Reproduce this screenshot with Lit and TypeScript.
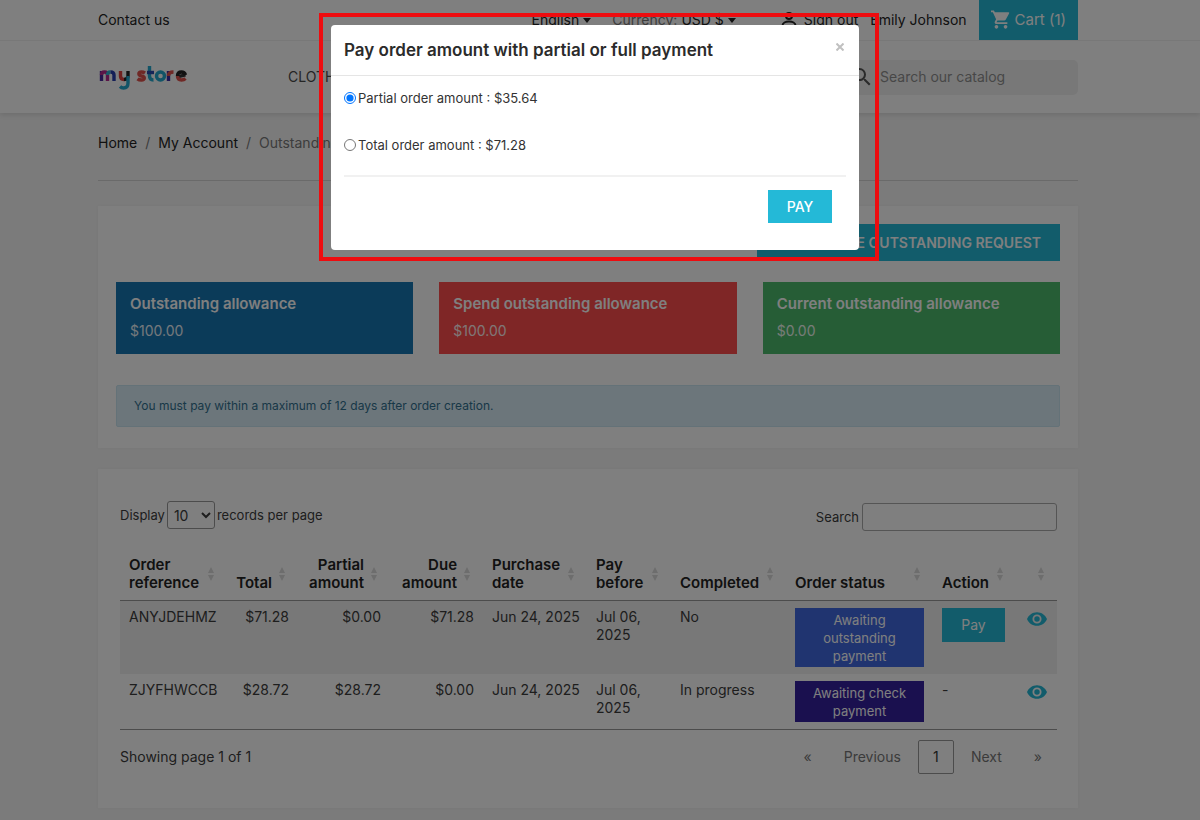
import { LitElement, html, css, svg } from "lit";
import { customElement, property, state } from "lit/decorators.js";

interface Order {
  reference: string;
  total: string;
  partial: string;
  due: string;
  purchased: string;
  payBefore: string;
  completed: string;
  status: string;
  tone: string;
  payable: boolean;
}

const ORDERS: Order[] = [
  { reference: "ANYJDEHMZ", total: "$71.28", partial: "$0.00", due: "$71.28", purchased: "Jun 24, 2025", payBefore: "Jul 06, 2025", completed: "No", status: "Awaiting outstanding payment", tone: "awaiting", payable: true },
  { reference: "ZJYFHWCCB", total: "$28.72", partial: "$28.72", due: "$0.00", purchased: "Jun 24, 2025", payBefore: "Jul 06, 2025", completed: "In progress", status: "Awaiting check payment", tone: "check", payable: false },
];

const COLUMNS = [
  { label: "Order reference", cls: "c-ref" },
  { label: "Total", cls: "c-total num" },
  { label: "Partial amount", cls: "c-partial num" },
  { label: "Due amount", cls: "c-due num" },
  { label: "Purchase date", cls: "c-date" },
  { label: "Pay before", cls: "c-before" },
  { label: "Completed", cls: "c-done" },
  { label: "Order status", cls: "c-status" },
  { label: "Action", cls: "c-action" },
  { label: "", cls: "c-view" },
];

const base = css`
  * { box-sizing: border-box; }
  button, input, select { font: inherit; margin: 0; }
  a { color: inherit; text-decoration: none; }
  svg { display: block; flex: none; }
  .container { max-width: 980px; margin: 0 auto; width: 100%; }
`;

@customElement("store-header")
export class StoreHeader extends LitElement {
  static styles = [base, css`
    :host { display: block; background: #fff; box-shadow: 0 2px 5px rgba(0, 0, 0, 0.11); position: relative; }
    .nav { border-bottom: 1px solid #f1f1f1; padding-right: 24px; }
    .bar { display: flex; align-items: stretch; height: 40px; }
    .bar > * { display: flex; align-items: center; }
    .links { margin-left: auto; }
    .pick { border: 0; background: none; padding: 0; color: #232323; display: flex; align-items: center; gap: 4px; }
    .caret { border: 4px solid transparent; border-top: 5px solid #232323; border-bottom: 0; }
    .currency { color: #7a7a7a; gap: 4px; margin-left: 21px; }
    .signout { gap: 7px; margin-left: 45px; }
    .name { margin-left: 12px; }
    .cart { background: #24b9d7; color: #fff; gap: 4px; padding: 0 12px; margin-left: 12px; font-size: 15px; }
    .main { padding-right: 24px; }
    .row { display: flex; align-items: center; height: 72px; }
    .logo { width: 90px; }
    .menu { margin-left: 100px; color: #4a4a4a; text-transform: uppercase; }
    .search { margin-left: auto; display: flex; align-items: center; gap: 8px; background: #f1f1f1; border-radius: 5px; height: 35px; width: 230px; padding: 0 4px; color: #555; }
    .search input { border: 0; background: none; min-width: 0; flex: 1; padding: 0; color: #232323; font-size: 14px; outline: 0; }
    .search input::placeholder { color: #8f8f8f; opacity: 1; }
  `];

  render() {
    return html`
      <div class="nav"><div class="container bar">
        <a href="#contact">Contact us</a>
        <div class="links"><button class="pick">English <span class="caret"></span></button></div>
        <div class="currency">Currency: <button class="pick">USD $ <span class="caret"></span></button></div>
        <a class="signout" href="#signout">
          <svg width="16" height="16" viewBox="0 0 16 16" fill="none" stroke="#232323" stroke-width="2"><circle cx="8" cy="4" r="3"/><path d="M1.5 15v-1.5c0-2.500 3-4 6.500-4s6.500 1.500 6.500 4V15z"/></svg>
          Sign out</a>
        <a class="name" href="#account">Emily Johnson</a>
        <a class="cart" href="#cart">
          <svg width="20" height="20" viewBox="1 1.500 22 22" fill="#fff"><path d="M7 18c-1.100 0-1.990.9-1.990 2S5.900 22 7 22s2-.9 2-2-.9-2-2-2zM1 2v2h2l3.600 7.590-1.350 2.450c-.16.280-.25.610-.25.960 0 1.100.9 2 2 2h12v-2H7.420c-.14 0-.25-.11-.25-.25l.03-.12.900-1.630h7.450c.75 0 1.410-.41 1.750-1.030l3.580-6.490A1 1 0 0 0 20 4H5.210l-.94-2H1zm16 16c-1.100 0-1.990.9-1.990 2s.89 2 1.990 2 2-.9 2-2-.9-2-2-2z"/></svg>
          Cart (1)</a>
      </div></div>
      <div class="main"><div class="container row">
        <a class="logo" href="#home" aria-label="my store">
          <svg width="90" height="28" viewBox="-1 -2 90 28" fill="none" stroke-width="3.400" stroke-linecap="butt">
            <path d="M2.500 16V6" stroke="#4b2a9e"/><path d="M2.500 10q0-3 3-3t3 3v6" stroke="#b72b8f"/><path d="M8.500 10q0-3 3-3" stroke="#2fb5d2"/><path d="M11.500 7q3.500 0 3.500 3v6" stroke="#2a3fae"/>
            <path d="M21.500 6v5q0 3.500 3.500 3.500" stroke="#e0413f"/><path d="M25 14.500q4 0 4-3.500V6" stroke="#222"/><path d="M29 11v7q0 5-4.500 5-2 0-3.500-1.500" stroke="#24a9cf"/>
            <path d="M46 8q-1.500-1-3.500-1c-3.500 0-3.500 3.500 0 4s4 4 0 4q-2.500 0-4-1.200" stroke="#e0524c"/>
            <path d="M50.500 1v10q0 4 4 4" stroke="#24a9cf"/><path d="M48 7.500h7" stroke="#2a4bb0"/>
            <circle cx="61.500" cy="11" r="4" stroke="#24a9cf"/>
            <path d="M69.500 16V6" stroke="#3a2da5"/><path d="M69.500 11q0-4 5-4" stroke="#e0524c"/>
            <path d="M78 11.800l8.500-2" stroke="#333"/><path d="M86.500 10q-1-3-4-3-4 0-4 4" stroke="#222"/><path d="M78.500 11q0 4 4 4 2.500 0 4-1.500" stroke="#e0524c"/>
          </svg></a>
        <a class="menu" href="#clothes">Clothes</a>
        <form class="search" role="search" @submit=${(e: Event) => e.preventDefault()}>
          <svg width="20" height="20" viewBox="2 2 20 20" fill="#555"><path d="M15.500 14h-.79l-.28-.27A6.470 6.470 0 0 0 16 9.500 6.500 6.500 0 1 0 9.500 16c1.610 0 3.090-.59 4.230-1.570l.27.280v.79l5 4.990L20.490 19l-4.990-5zm-6 0C7.010 14 5 11.990 5 9.500S7.010 5 9.500 5 14 7.010 14 9.500 11.990 14 9.500 14z"/></svg>
          <input type="text" aria-label="Search our catalog" placeholder="Search our catalog">
        </form>
      </div></div>`;
  }
}

@customElement("allowance-panel")
export class AllowancePanel extends LitElement {
  static styles = [base, css`
    :host { display: block; background: #fff; padding: 18px 18px 21px; box-shadow: 0 0 4px rgba(0, 0, 0, 0.03); }
    .top { display: flex; justify-content: flex-end; }
    .request { border: 0; background: #24b9d7; color: #fff; font-weight: 600; text-transform: uppercase; text-align: right; padding: 0 19px; height: 37px; min-width: 303px; }
    .tiles { display: grid; grid-template-columns: repeat(3, 1fr); gap: 26px; margin-top: 21px; }
    .tile { color: #fff; padding: 12px 14px; height: 72px; line-height: 20px; display: grid; gap: 6px; }
    .tile strong { font-weight: 600; font-size: 15px; }
    .blue { background: #1776b3; }
    .red { background: #ff4c4c; }
    .green { background: #4cbb6c; }
    .value { opacity: 0.9; }
    .note { margin: 31px 0 0; border: 1px solid #c9e4f0; background: #d9edf7; color: #31708f; padding: 11px 17px; font-size: 12px; line-height: 18px; border-radius: 2px; }
  `];

  render() {
    const tiles = [
      ["blue", "Outstanding allowance", "$100.00"],
      ["red", "Spend outstanding allowance", "$100.00"],
      ["green", "Current outstanding allowance", "$0.00"],
    ];
    return html`
      <div class="top"><button class="request">Generate outstanding request</button></div>
      <div class="tiles">${tiles.map(([tone, label, value]) => html`
        <div class="tile ${tone}"><strong>${label}</strong><span class="value">${value}</span></div>`)}
      </div>
      <p class="note">You must pay within a maximum of 12 days after order creation.</p>`;
  }
}

@customElement("orders-panel")
export class OrdersPanel extends LitElement {
  @property({ attribute: false }) orders: Order[] = ORDERS;

  static styles = [base, css`
    :host { display: block; background: #fff; padding: 32px 21px 34px 22px; box-shadow: 0 0 4px rgba(0, 0, 0, 0.03); }
    .tools { display: flex; justify-content: space-between; align-items: flex-start; font-size: 13px; color: #3c3c3c; }
    .tools label { display: flex; align-items: center; gap: 2px; }
    .size { height: 28px; width: 48px; border: 1px solid #999; border-radius: 3px; background: #fff; color: #3c3c3c; font-size: 14px; padding: 0 2px; }
    .find { height: 28px; width: 195px; border: 1px solid #aaa; border-radius: 3px; background: #fff; padding: 4px; }
    .tools .search { padding-top: 2px; gap: 3px; }
    table { width: 100%; margin-top: 17px; border-collapse: separate; border-spacing: 0; table-layout: fixed; border-bottom: 1px solid #999; line-height: 18px; }
    th { text-align: left; vertical-align: bottom; font-weight: 600; font-size: 15px; color: #232323; padding: 8px 26px 8px 9px; border-bottom: 1px solid #999; position: relative; }
    td { vertical-align: top; padding: 7px 9px; color: #3c3c3c; }
    td:not(.wrap) { white-space: nowrap; }
    tbody tr:nth-child(odd) { background: #f1f1f1; }
    .num { text-align: right; }
    .sort { position: absolute; right: 13px; top: 50%; margin-top: -7px; }
    .c-ref { width: 107px; } .c-total { width: 71px; } .c-partial { width: 92px; } .c-due { width: 93px; } .c-date { width: 104px; }
    .c-before { width: 84px; } .c-done { width: 115px; } .c-status { width: 147px; } .c-action { width: 83px; } .c-view { width: 41px; }
    .badge { display: block; text-align: center; color: #fff; font-size: 13px; padding: 3px 12px 2px; }
    .awaiting { background: #4169e1; }
    .check { background: #34209e; }
    .pay { border: 0; background: #24b9d7; color: #fff; height: 34px; width: 63px; padding: 0; }
    .eye { display: flex; justify-content: center; padding-top: 1px; }
    .foot { display: flex; justify-content: space-between; align-items: center; margin-top: 10px; color: #3c3c3c; }
    .pages { display: flex; align-items: center; color: #777; }
    .pages button { border: 1px solid transparent; background: none; color: #777; height: 34px; padding: 0 16px; border-radius: 2px; }
    .pages .edge { padding: 0 14px; }
    .pages .current { border-color: #999; color: #333; width: 36px; padding: 0; }
  `];

  private row(o: Order) {
    return html`<tr>
      <td>${o.reference}</td>
      <td class="num">${o.total}</td>
      <td class="num">${o.partial}</td>
      <td class="num">${o.due}</td>
      <td>${o.purchased}</td>
      <td class="wrap">${o.payBefore}</td>
      <td>${o.completed}</td>
      <td class="wrap"><span class="badge ${o.tone}">${o.status}</span></td>
      <td>${o.payable ? html`<button class="pay">Pay</button>` : "-"}</td>
      <td><a class="eye" href="#order" aria-label="View order">
        <svg width="20" height="20" viewBox="1 2 22 20" fill="#24b9d7"><path d="M12 4.500C7 4.500 2.730 7.610 1 12c1.730 4.390 6 7.500 11 7.500s9.270-3.110 11-7.500c-1.730-4.390-6-7.500-11-7.500zM12 17a5 5 0 1 1 0-10 5 5 0 0 1 0 10zm0-8a3 3 0 1 0 0 6 3 3 0 0 0 0-6z"/></svg></a></td>
    </tr>`;
  }

  render() {
    return html`
      <div class="tools">
        <label>Display <select class="size"><option>10</option><option>25</option><option>50</option></select> records per page</label>
        <label class="search">Search <input class="find" type="search"></label>
      </div>
      <table>
        <thead><tr>${COLUMNS.map((c) => html`<th class=${c.cls} scope="col">${c.label}
          <svg class="sort" width="6" height="14" viewBox="0 0 6 14" fill="#dadada">${svg`<path d="M3 0l3 6H0zM0 8h6l-3 6z"/>`}</svg></th>`)}</tr></thead>
        <tbody>${this.orders.map((o) => this.row(o))}</tbody>
      </table>
      <div class="foot">
        <span>Showing page 1 of 1</span>
        <nav class="pages" aria-label="Pages">
          <button class="edge">«</button><button>Previous</button><button class="current">1</button><button>Next</button><button class="edge">»</button>
        </nav>
      </div>`;
  }
}

@customElement("payment-dialog")
export class PaymentDialog extends LitElement {
  @state() private choice = "partial";

  static styles = [base, css`
    :host { position: fixed; inset: 0; background: rgba(0, 0, 0, 0.5); display: flex; justify-content: center; align-items: flex-start; padding: 25px 10px 25px 0; }
    .dialog { position: relative; width: 100%; max-width: 528px; background: #fff; border-radius: 4px; }
    .dialog::after { content: ""; position: absolute; inset: -12px -20px -11px -12px; border: 4px solid #ee0c0f; pointer-events: none; }
    header { display: flex; justify-content: space-between; align-items: flex-start; padding: 13px; border-bottom: 1px solid #e5e5e5; }
    h2 { margin: 0; font-size: 17px; line-height: 24px; font-weight: 600; color: #2b2b2b; }
    .close { border: 0; background: none; padding: 0; color: #c4c4c4; line-height: 18px; width: 12px; height: 18px; display: grid; place-items: center; }
    .body { padding: 12px 13px 27px; }
    .option { display: flex; align-items: center; gap: 2px; font-size: 13px; line-height: 20px; color: #333; }
    .option + .option { margin-top: 27px; }
    .option input { width: 12px; height: 12px; accent-color: #0075ff; }
    .actions { margin-top: 20px; border-top: 2px solid #f1f1f1; padding: 13px 14px 0; display: flex; justify-content: flex-end; }
    .pay { border: 0; background: #24b9d7; color: #fff; font-weight: 500; text-transform: uppercase; height: 33px; width: 64px; padding: 0; }
  `];

  private option(id: string, text: string) {
    return html`<label class="option"><input type="radio" name="amount" .checked=${this.choice === id} @change=${() => (this.choice = id)}>${text}</label>`;
  }

  render() {
    return html`
      <section class="dialog" role="dialog" aria-labelledby="title">
        <header>
          <h2 id="title">Pay order amount with partial or full payment</h2>
          <button class="close" aria-label="Close"><svg width="8" height="8" viewBox="0 0 8 8" stroke="#c0c0c0" stroke-width="2"><path d="M.5.5l7 7M7.500.5l-7 7"/></svg></button>
        </header>
        <form class="body" @submit=${(e: Event) => e.preventDefault()}>
          ${this.option("partial", "Partial order amount : $35.64")}
          ${this.option("total", "Total order amount : $71.28")}
          <div class="actions"><button class="pay">Pay</button></div>
        </form>
      </section>`;
  }
}

@customElement("app-root")
export class AppRoot extends LitElement {
  static styles = [base, css`
    :host { display: block; min-height: 100vh; background: #f6f6f6; font: 14px/20px Inter, "Noto Sans", sans-serif; color: #232323; }
    .page { padding: 20px 24px 12px 0; }
    .crumbs { display: flex; gap: 8px; padding-bottom: 27px; border-bottom: 1px solid #d4d4d4; }
    .crumbs .sep, .crumbs .here { color: #7a7a7a; }
    .panels { display: grid; gap: 21px; margin-top: 25px; }
  `];

  render() {
    return html`
      <store-header></store-header>
      <main class="page"><div class="container">
        <nav class="crumbs" aria-label="Breadcrumb">
          <a href="#home">Home</a><span class="sep">/</span><a href="#account">My Account</a><span class="sep">/</span><span class="here">Outstanding</span>
        </nav>
        <div class="panels">
          <allowance-panel></allowance-panel>
          <orders-panel></orders-panel>
        </div>
      </div></main>
      <payment-dialog></payment-dialog>`;
  }
}
